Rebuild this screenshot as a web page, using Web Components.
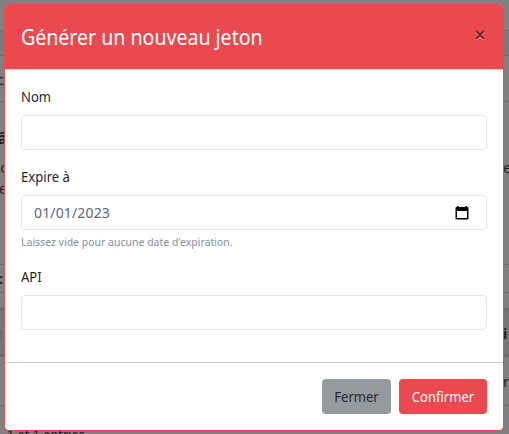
<!DOCTYPE html>
<html lang="fr"><head><meta charset="utf-8"><title>Générer un nouveau jeton</title>
<style>html,body{margin:0;height:434px;overflow:hidden;background:#808080}body{font:14px/21px "Noto Sans",sans-serif}</style></head>
<body>
<page-behind></page-behind>
<modal-dialog>
<span slot="title">Générer un nouveau jeton</span>
<form-field label="Nom"></form-field>
<form-field label="Expire à" value="01/01/2023" date hint="Laissez vide pour aucune date d'expiration."></form-field>
<form-field label="API"></form-field>
<action-button slot="footer" class="grey">Fermer</action-button>
<action-button slot="footer">Confirmer</action-button>
</modal-dialog>
<script>
const define=(name,html)=>customElements.define(name,class extends HTMLElement{
 connectedCallback(){if(this.shadowRoot)return;const t=document.createElement('template');t.innerHTML=typeof html==='function'?html(this):html;this.attachShadow({mode:'open'}).append(t.content.cloneNode(true));}
});
define('page-behind',`<style>
:host{display:block;width:509px;height:434px;overflow:hidden;color:#1b1e22}
div{box-sizing:border-box;border-bottom:1px solid #6b6d6f;display:flex;justify-content:space-between;overflow:hidden}
.l{width:4px;white-space:nowrap;direction:rtl}.r{width:6px;white-space:nowrap}
p{margin:0}b{font-weight:700}
</style>
<div style="height:31px"></div>
<div style="height:25px;background:#7a7a7b"></div>
<div style="height:46px;padding-top:13px"><span class="l">c</span></div>
<div style="height:163px;padding-top:26px"><span class="l" style="width:7px"><b style="display:block;font-size:16px;line-height:20px;width:9px">â</b><p style="padding-top:9px;width:8px">c</p><p>e</p></span><span class="r" style="padding-top:29px">e</span></div>
<div style="height:28px;padding-top:3px"><b class="l" style="width:3px">c</b></div>
<div style="height:17px;border-bottom:2px solid #696b6d"></div>
<div style="height:47px;background:#757677;border-bottom:3px solid #696b6d;padding-top:13px"><b class="l" style="color:#606468">↑</b><b class="r">i</b></div>
<div style="height:49px;padding-top:14px"><span></span><span class="r">r</span></div>
<p style="padding:18px 0 0 7px;transform:scaleX(.91);transform-origin:7px 0">1 et 1 entries</p>`);
define('modal-dialog',`<style>
:host{position:absolute;left:4px;top:4px;width:500px;height:427px;box-sizing:border-box;background:#fff;border:1px solid #e9494f;border-radius:5px;display:flex;flex-direction:column;overflow:hidden}
header{box-sizing:border-box;height:65px;flex:none;background:#e9494f;border-bottom:1px solid #d5cdd2;display:flex;justify-content:space-between;padding:16px;color:#fff}
h4{margin:0;font-weight:400;font-size:21px;line-height:33px;transform:scaleX(.931);transform-origin:0 0}
svg{margin:8px 1px 0 0;width:12px;height:12px}
main{flex:1;padding:17px 16px 0;display:flex;flex-direction:column;gap:17px}
footer{height:68px;box-sizing:border-box;border-top:1px solid #c8ced3;padding:16px;display:flex;justify-content:flex-end;gap:8px;flex:none}
</style><header><h4><slot name="title"></slot></h4><svg viewBox="0 0 12 12"><path d="M2 3l8 8M10 3l-8 8" stroke="#f4a4a7" stroke-width="2"/><path d="M2 2l8 8M10 2l-8 8" stroke="#742527" stroke-width="2"/></svg></header><main><slot></slot></main><footer><slot name="footer"></slot></footer>`);
define('form-field',e=>`<style>
:host{display:block;color:#23282c}
label{display:block;height:21px;margin-bottom:7px;line-height:20px;transform:scaleX(.935);transform-origin:0 0}
.i{box-sizing:border-box;height:35px;border:1px solid #e4e7ea;border-radius:4px;display:flex;align-items:center;justify-content:space-between;padding:0 16px 0 12px;color:#5c6873;letter-spacing:.15px}
small{display:block;font-size:11.2px;line-height:17px;margin:3px 0 0;color:#818f9c;height:17px;transform:scaleX(.938);transform-origin:0 0;white-space:nowrap}
</style><label>${e.getAttribute('label')}</label><div class="i"><span>${e.getAttribute('value')||''}</span>${e.hasAttribute('date')?'<svg width="16" height="16" viewBox="0 0 16 16"><path d="M3 1h1.5v1h7V1H13v1h.5a1 1 0 0 1 1 1v10.5a1 1 0 0 1-1 1h-11a1 1 0 0 1-1-1V3a1 1 0 0 1 1-1H3zM3 6v7h10V6z" fill="#000" fill-rule="evenodd"/></svg>':''}</div>${e.getAttribute('hint')?`<small>${e.getAttribute('hint')}</small>`:''}`);
define('action-button',`<style>:host{display:block;box-sizing:border-box;height:35px;width:88px;border-radius:4px;background:#e9494f;color:#fff;text-align:center;line-height:35px}
:host(.grey){width:69px;background:#959a9e;color:#23282c}span{display:block;transform:scaleX(.93)}</style><span><slot></slot></span>`);
</script></body></html>
